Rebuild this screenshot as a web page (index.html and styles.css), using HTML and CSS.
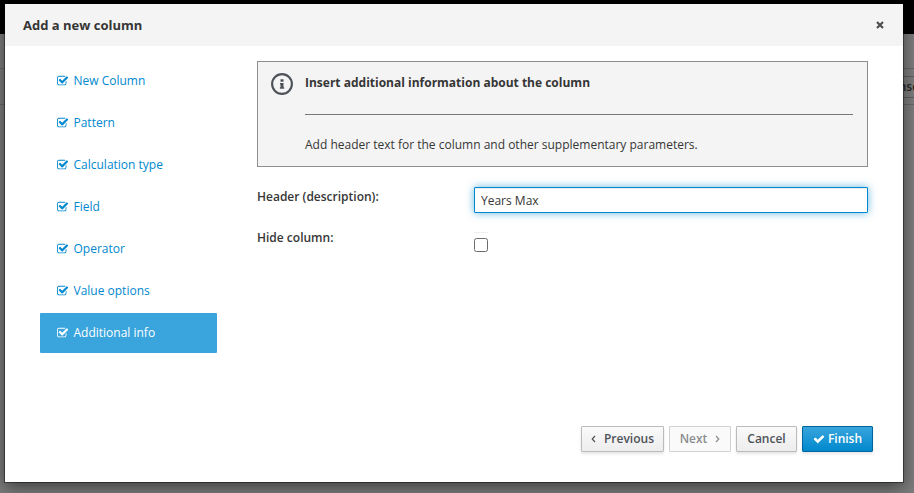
FILE: index.html
```html
<!DOCTYPE html>
<html lang="en">
<head>
<meta charset="utf-8">
<title>Add a new column</title>
<link rel="stylesheet" href="styles.css">
</head>
<body>
<svg class="symbols" aria-hidden="true">
  <symbol id="check-square" viewBox="0 0 1664 1792"><path d="M1408 930v318q0 119-84.5 203.5t-203.5 84.5h-832q-119 0-203.5-84.5t-84.5-203.5v-832q0-119 84.5-203.5t203.5-84.5h832q63 0 117 25 15 7 18 23 3 17-9 29l-49 49q-10 10-23 10-3 0-9-2-23-6-45-6h-832q-66 0-113 47t-47 113v832q0 66 47 113t113 47h832q66 0 113-47t47-113v-254q0-13 9-22l64-64q10-10 23-10 6 0 12 3 20 8 20 29zm231-489l-814 814q-24 24-57 24t-57-24l-430-430q-24-24-24-57t24-57l110-110q24-24 57-24t57 24l263 263 647-647q24-24 57-24t57 24l110 110q24 24 24 57t-24 57z"/></symbol>
</svg>
<div class="page">
  <div class="masthead"></div>
  <div class="titlebar"></div>
  <div class="toolbar"><span class="insert">Insert</span></div>
</div>
<div class="modal" role="dialog">
  <header class="modal-header">
    <h4>Add a new column</h4>
    <svg class="close" viewBox="0 0 8 8"><path d="M1 1l6 6M7 1l-6 6"/></svg>
  </header>
  <div class="modal-body">
    <nav class="steps">
      <a class="step"><svg><use href="#check-square"/></svg>New Column</a>
      <a class="step"><svg><use href="#check-square"/></svg>Pattern</a>
      <a class="step"><svg><use href="#check-square"/></svg>Calculation type</a>
      <a class="step"><svg><use href="#check-square"/></svg>Field</a>
      <a class="step"><svg><use href="#check-square"/></svg>Operator</a>
      <a class="step"><svg><use href="#check-square"/></svg>Value options</a>
      <a class="step active"><svg><use href="#check-square"/></svg>Additional info</a>
    </nav>
    <main class="content">
      <section class="notice">
        <svg class="info" viewBox="0 0 22 22"><circle cx="11" cy="11" r="9.9"/><path d="M9.5 6.3h3v2.4h-3zM9 9.9h3.5v4.3h.7v1.6H8.9v-1.6h.6v-2.7H9z"/></svg>
        <div class="notice-text">
          <strong>Insert additional information about the column</strong>
          <p>Add header text for the column and other supplementary parameters.</p>
        </div>
      </section>
      <div class="row">
        <label for="header">Header (description):</label>
        <input id="header" class="text" type="text" value="Years Max">
      </div>
      <div class="row hide-row">
        <label for="hide">Hide column:</label>
        <div class="check-wrap"><input id="hide" class="check" type="checkbox"></div>
      </div>
    </main>
  </div>
  <footer class="modal-footer">
    <button class="btn prev"><svg class="angle" viewBox="0 0 5 8"><path d="M4 1L1.2 4L4 7"/></svg>Previous</button>
    <button class="btn next" disabled>Next<svg class="angle" viewBox="0 0 5 8"><path d="M1 1l2.8 3L1 7"/></svg></button>
    <button class="btn cancel">Cancel</button>
    <button class="btn primary"><svg class="tick" viewBox="0 0 1792 1792"><path d="M1671 566q0 40-28 68l-724 724-136 136q-28 28-68 28t-68-28l-136-136-362-362q-28-28-28-68t28-68l136-136q28-28 68-28t68 28l294 295 656-657q28-28 68-28t68 28l136 136q28 28 28 68z"/></svg>Finish</button>
  </footer>
</div>
</body>
</html>
```
FILE: styles.css
```css
* { box-sizing: border-box; }
body {
  margin: 0;
  height: 493px;
  overflow: hidden;
  background: #7b7b7b;
  color: #363636;
  font: 12px/20px "Open Sans", "Noto Sans", sans-serif;
}
.symbols { position: absolute; width: 0; height: 0; }

.masthead { height: 34px; background: #000; }
.titlebar { height: 35px; border-bottom: 1px solid #656565; }
.toolbar {
  display: flex;
  justify-content: flex-end;
  height: 36px;
  padding-top: 7px;
  border-bottom: 1px solid #656565;
}
.insert {
  width: 30px;
  height: 22px;
  margin-right: -8px;
  padding-left: 2px;
  border: 1px solid #5c5c5c;
  font-weight: 600;
  line-height: 20px;
  color: #262626;
}

.modal {
  position: absolute;
  top: 4px;
  left: 5px;
  display: flex;
  flex-direction: column;
  width: 898px;
  height: 478px;
  background: #fff;
  box-shadow: 0 0 0 1px rgba(0, 0, 0, .42), 0 5px 15px rgba(0, 0, 0, .5);
}
.modal-header {
  display: flex;
  align-items: center;
  justify-content: space-between;
  height: 42px;
  padding: 0 19px 0 18px;
  background: #f4f4f4;
}
.modal-header h4 { margin: 0; font-size: 13px; font-weight: 700; line-height: 20px; }
.close { width: 8px; height: 8px; fill: none; stroke: #505050; stroke-width: 2.2; }

.modal-body { display: flex; flex: 1; padding: 15px 35px 0; }
.steps { display: flex; flex-direction: column; gap: 2px; width: 177px; }
.step {
  display: flex;
  align-items: center;
  height: 40px;
  padding-left: 17px;
  border-radius: 1px;
  color: #0088ce;
}
.step svg { width: 11.2px; height: 12px; margin-right: 5.3px; fill: currentColor; }
.step.active { background: #39a5dc; color: #fff; }

.content { width: 611px; margin-left: 40px; }
.notice {
  display: flex;
  height: 106px;
  padding: 11px 14px 0 13px;
  border: 1px solid #8b8d8f;
  background: #f4f4f4;
}
.info { width: 22px; height: 22px; margin-right: 12px; fill: #4d5258; }
.info circle { fill: none; stroke: #4d5258; stroke-width: 2.1; }
.notice-text { flex: 1; }
.notice-text strong {
  display: block;
  height: 42px;
  border-bottom: 1px solid #777;
}
.notice-text p { margin: 20px 0 0; }

.row { display: flex; margin-top: 20px; }
.row label { width: 217px; font-weight: 600; }
.text {
  width: 394px;
  height: 26px;
  padding: 2px 6px;
  border: 1px solid #0088ce;
  border-radius: 1px;
  outline: 0;
  background: #fff;
  color: #363636;
  font: inherit;
  box-shadow: inset 0 1px 1px rgba(3, 3, 3, .075), 0 0 8px rgba(0, 136, 206, .6);
}
.hide-row { margin-top: 15px; }
.check-wrap { width: 14px; height: 20px; margin-top: 4px; padding-top: 5px; border-top: 1px solid #efefef; }
.check {
  display: block;
  width: 14px;
  height: 14px;
  margin: 0;
  border: 1px solid #6b6b6b;
  border-radius: 2.5px;
  appearance: none;
  background: #fff;
}

.modal-footer {
  display: flex;
  justify-content: flex-end;
  gap: 5px;
  padding: 0 30px 30px 0;
}
.btn {
  display: flex;
  align-items: center;
  justify-content: center;
  height: 26px;
  padding: 0 0 1px;
  border: 1px solid #bbb;
  border-radius: 1px;
  background: linear-gradient(#fafafa, #ededed);
  box-shadow: 0 2px 3px rgba(3, 3, 3, .1);
  color: #4d5258;
  font: 600 12px/20px "Open Sans", "Noto Sans", sans-serif;
}
.prev { width: 83px; }
.next { width: 62px; background: #fafafa; border-color: #d1d1d1; box-shadow: none; color: #8b8d8f; }
.cancel { width: 61px; }
.primary { width: 71px; border-color: #00659c; background: linear-gradient(#39a5dc, #0088ce); color: #fff; }
.angle { width: 5px; height: 8px; fill: none; stroke: currentColor; stroke-width: 1.2; }
.prev .angle { margin-right: 8px; }
.next .angle { margin-left: 8px; }
.tick { width: 12px; height: 12px; margin-right: 3px; fill: currentColor; }
```
